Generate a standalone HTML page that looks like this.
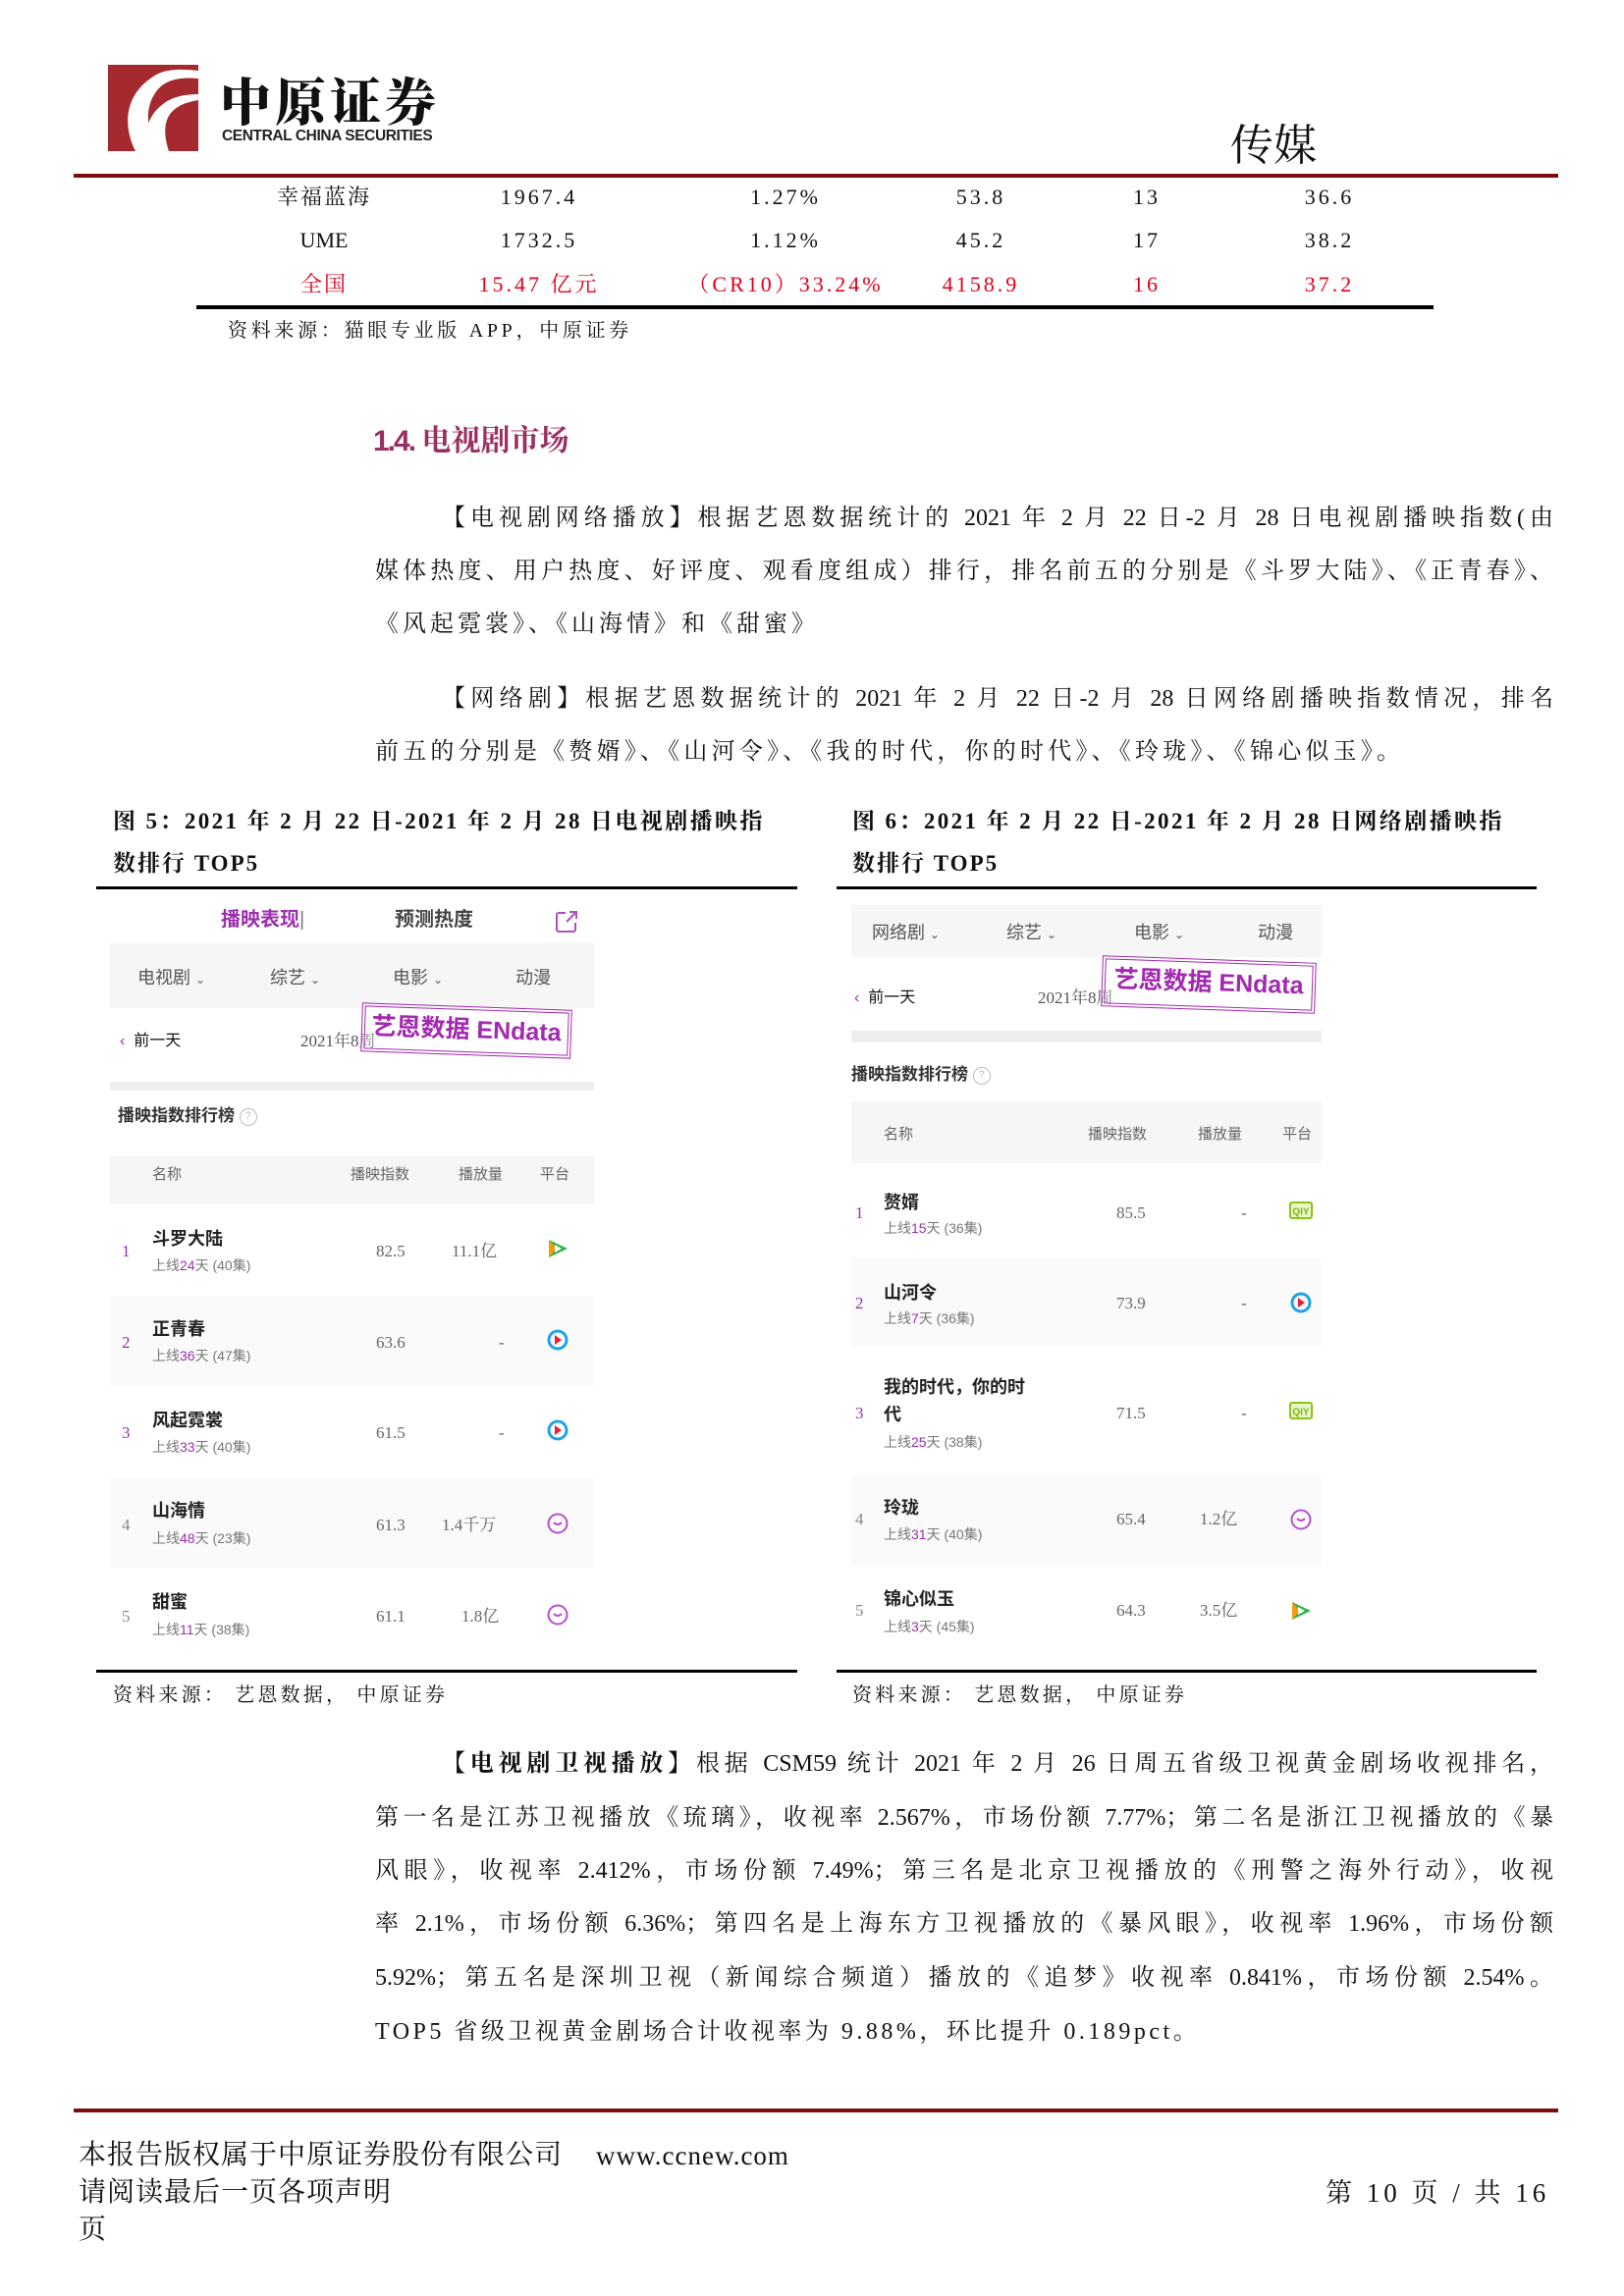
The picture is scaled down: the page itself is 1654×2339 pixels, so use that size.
<!DOCTYPE html>
<html><head><meta charset="utf-8">
<style>
*{margin:0;padding:0;box-sizing:border-box}
body{width:1654px;height:2339px;background:#fff;position:relative;overflow:hidden;font-family:"Liberation Serif","Noto Serif CJK SC",serif;color:#111}
.a{position:absolute;white-space:nowrap}
.c{position:absolute;white-space:nowrap;line-height:30px;height:30px}
.cc{transform:translateX(-50%)}
.p{position:absolute;font-size:24px;line-height:30px;white-space:nowrap}
.j{text-align:justify;text-align-last:justify;white-space:normal;overflow:hidden;height:30px}
.ss{font-family:"Liberation Sans","Noto Sans CJK SC",sans-serif}
.g{color:#555}
.pu{color:#9b2fae}
.b{font-weight:bold}
.band{position:absolute;background:#f6f6f6}
.rk{font-size:17px;color:#9b2fae}
.nm{font-size:18px;font-family:"Liberation Sans","Noto Sans CJK SC",sans-serif;font-weight:bold;color:#222}
.sb{font-size:14px;color:#777;font-family:"Liberation Sans","Noto Sans CJK SC",sans-serif}
.sb i{font-style:normal;color:#9b2fae}
.v{font-size:17px;color:#666}
.hd{font-size:15px;color:#666;font-family:"Liberation Sans","Noto Sans CJK SC",sans-serif}
.tb{font-size:18px;font-family:"Liberation Sans","Noto Sans CJK SC",sans-serif;color:#555}
.stamp{position:absolute;border:4px double #a22ab0;color:#a22ab0;font-family:"Liberation Sans","Noto Sans CJK SC",sans-serif;font-weight:bold;font-size:25px;line-height:40px;text-align:center;transform:rotate(2deg);background:rgba(255,255,255,0.3)}
.tn{letter-spacing:3px}
</style></head><body>

<svg class="a" style="left:110px;top:66px" width="92" height="88" viewBox="0 0 92 88">
<rect x="0" y="0" width="92" height="88" fill="#a52a2f"/>
<path d="M28 88 C14 60 18 30 46 12 C58 4 72 4 92 6 L92 14 C72 12 58 16 50 26 C36 44 40 66 50 88 Z" fill="#fff"/>
<path d="M40 88 C36 70 40 52 56 40 C66 32 80 30 92 30 L92 36 C80 38 68 42 62 52 C56 62 58 76 62 88Z" fill="#fff"/>
</svg>
<div class="a b" style="left:224px;top:74px;font-size:52px;line-height:54px;letter-spacing:4px;font-family:'Noto Serif CJK SC',serif;font-weight:900;color:#111">中原证券</div>
<div class="a b ss" style="left:226px;top:130px;font-size:15.5px;line-height:18px;letter-spacing:-0.4px;color:#222">CENTRAL CHINA SECURITIES</div>
<div class="a" style="left:1253px;top:112px;font-size:44px;font-family:'Noto Serif CJK SC',serif;color:#111">传媒</div>
<div class="a" style="left:75px;top:177px;width:1512px;height:4px;background:#7f0c0c"></div>

<div style="font-size:22px">
<div class="c cc" style="left:330px;top:186px;letter-spacing:2px">幸福蓝海</div>
<div class="c cc tn" style="left:549px;top:186px">1967.4</div>
<div class="c cc tn" style="left:800px;top:186px">1.27%</div>
<div class="c cc tn" style="left:999px;top:186px">53.8</div>
<div class="c cc tn" style="left:1168px;top:186px">13</div>
<div class="c cc tn" style="left:1354px;top:186px">36.6</div>
<div class="c cc" style="left:330px;top:230px">UME</div>
<div class="c cc tn" style="left:549px;top:230px">1732.5</div>
<div class="c cc tn" style="left:800px;top:230px">1.12%</div>
<div class="c cc tn" style="left:999px;top:230px">45.2</div>
<div class="c cc tn" style="left:1168px;top:230px">17</div>
<div class="c cc tn" style="left:1354px;top:230px">38.2</div>
<div style="color:#e3001b">
<div class="c cc" style="left:330px;top:275px;letter-spacing:2px">全国</div>
<div class="c cc tn" style="left:549px;top:275px">15.47 亿元</div>
<div class="c cc tn" style="left:800px;top:275px">（CR10）33.24%</div>
<div class="c cc tn" style="left:999px;top:275px">4158.9</div>
<div class="c cc tn" style="left:1168px;top:275px">16</div>
<div class="c cc tn" style="left:1354px;top:275px">37.2</div>
</div>
</div>
<div class="a" style="left:200px;top:311px;width:1260px;height:4px;background:#000"></div>
<div class="c" style="left:232px;top:322px;font-size:20px;letter-spacing:3.7px">资料来源：猫眼专业版 APP，中原证券</div>

<div class="a b" style="left:380px;top:430px;font-size:30px;color:#9a2f62;line-height:40px"><span class="ss" style="letter-spacing:-2px">1.4.</span> 电视剧市场</div>

<div class="p j" style="left:450px;top:513px;width:1132px">【电视剧网络播放】根据艺恩数据统计的 2021 年 2 月 22 日-2 月 28 日电视剧播映指数(由</div>
<div class="p j" style="left:382px;top:567px;width:1200px">媒体热度、用户热度、好评度、观看度组成）排行，排名前五的分别是《斗罗大陆》、《正青春》、</div>
<div class="p" style="left:382px;top:621px;letter-spacing:4px">《风起霓裳》、《山海情》和《甜蜜》</div>
<div class="p j" style="left:450px;top:697px;width:1132px">【网络剧】根据艺恩数据统计的 2021 年 2 月 22 日-2 月 28 日网络剧播映指数情况，排名</div>
<div class="p" style="left:382px;top:751px;letter-spacing:4.2px">前五的分别是《赘婿》、《山河令》、《我的时代，你的时代》、《玲珑》、《锦心似玉》。</div>

<div class="p b" style="left:115px;top:822px;font-size:23px;letter-spacing:2.4px">图 5：2021 年 2 月 22 日-2021 年 2 月 28 日电视剧播映指</div>
<div class="p b" style="left:115px;top:865px;font-size:23px;letter-spacing:2px">数排行 TOP5</div>
<div class="p b" style="left:868px;top:822px;font-size:23px;letter-spacing:2.4px">图 6：2021 年 2 月 22 日-2021 年 2 月 28 日网络剧播映指</div>
<div class="p b" style="left:868px;top:865px;font-size:23px;letter-spacing:2px">数排行 TOP5</div>
<div class="a" style="left:98px;top:903px;width:714px;height:3px;background:#000"></div>
<div class="a" style="left:852px;top:903px;width:713px;height:3px;background:#000"></div>

<div class="c b ss pu" style="left:225px;top:922px;font-size:20px">播映表现<span style="font-weight:normal;color:#777">|</span></div>
<div class="c b ss" style="left:402px;top:922px;font-size:20px;color:#444">预测热度</div>
<svg class="a" style="left:564px;top:926px" width="26" height="26" viewBox="0 0 26 26"><path d="M12 4H5a2 2 0 0 0-2 2v15a2 2 0 0 0 2 2h15a2 2 0 0 0 2-2v-7M13 13L23 3M16 3h7v7" fill="none" stroke="#b04dc0" stroke-width="2"/></svg>
<div class="band" style="left:112px;top:960px;width:493px;height:67px"></div>
<div class="c tb pu" style="left:140px;top:981px">电视剧 <span style="font-size:12px">⌄</span></div>
<div class="c tb" style="left:275px;top:981px">综艺 <span style="font-size:12px">⌄</span></div>
<div class="c tb" style="left:400px;top:981px">电影 <span style="font-size:12px">⌄</span></div>
<div class="c tb" style="left:525px;top:981px">动漫</div>
<div class="c ss" style="left:122px;top:1046px;font-size:16px"><span class="pu">‹</span>&nbsp; 前一天</div>
<div class="c" style="left:306px;top:1046px;font-size:17px;color:#555">2021年8周</div>
<div class="stamp" style="left:368px;top:1025px;width:214px;height:50px">艺恩数据 ENdata</div>
<div class="band" style="left:112px;top:1102px;width:493px;height:9px;background:#eee"></div>
<div class="c b ss" style="left:120px;top:1122px;font-size:17px;color:#333">播映指数排行榜 <span style="display:inline-block;width:18px;height:18px;border:1.5px solid #bbb;border-radius:50%;font-size:11px;line-height:15px;text-align:center;color:#bbb;font-weight:normal;vertical-align:middle">?</span></div>
<div class="band" style="left:112px;top:1178px;width:493px;height:49px"></div>
<div class="c hd" style="left:155px;top:1182px">名称</div>
<div class="c hd" style="left:357px;top:1182px">播映指数</div>
<div class="c hd" style="left:467px;top:1182px">播放量</div>
<div class="c hd" style="left:550px;top:1182px">平台</div>
<div class="band" style="left:112px;top:1320px;width:493px;height:92px;background:#fafafa"></div>
<div class="band" style="left:112px;top:1505px;width:493px;height:92px;background:#fafafa"></div>

<div class="c rk" style="left:124px;top:1260px">1</div><div class="c nm" style="left:155px;top:1247px">斗罗大陆</div><div class="c sb" style="left:155px;top:1274px">上线<i>24</i>天 (40集)</div><div class="c v" style="left:383px;top:1260px">82.5</div><div class="c v" style="left:460px;top:1260px">11.1亿</div>
<div class="c rk" style="left:124px;top:1353px">2</div><div class="c nm" style="left:155px;top:1339px">正青春</div><div class="c sb" style="left:155px;top:1366px">上线<i>36</i>天 (47集)</div><div class="c v" style="left:383px;top:1353px">63.6</div><div class="c v" style="left:508px;top:1353px">-</div>
<div class="c rk" style="left:124px;top:1445px">3</div><div class="c nm" style="left:155px;top:1432px">风起霓裳</div><div class="c sb" style="left:155px;top:1459px">上线<i>33</i>天 (40集)</div><div class="c v" style="left:383px;top:1445px">61.5</div><div class="c v" style="left:508px;top:1445px">-</div>
<div class="c rk" style="left:124px;top:1539px;color:#888">4</div><div class="c nm" style="left:155px;top:1524px">山海情</div><div class="c sb" style="left:155px;top:1552px">上线<i>48</i>天 (23集)</div><div class="c v" style="left:383px;top:1539px">61.3</div><div class="c v" style="left:450px;top:1539px">1.4千万</div>
<div class="c rk" style="left:124px;top:1632px;color:#888">5</div><div class="c nm" style="left:155px;top:1617px">甜蜜</div><div class="c sb" style="left:155px;top:1645px">上线<i>11</i>天 (38集)</div><div class="c v" style="left:383px;top:1632px">61.1</div><div class="c v" style="left:470px;top:1632px">1.8亿</div>

<svg class="a" style="left:557px;top:1262px" width="22" height="20" viewBox="0 0 22 20"><path d="M2 1L21 10L2 19Z" fill="#2fb24a"/><path d="M2 1L10 10L2 19Z" fill="#f39c12"/><path d="M8 6L15 10L8 14Z" fill="#fff"/></svg>
<svg class="a" style="left:557px;top:1354px" width="22" height="22" viewBox="0 0 22 22"><circle cx="11" cy="11" r="9" fill="none" stroke="#1fa3e8" stroke-width="3"/><path d="M8 6l7 5-7 5z" fill="#e8203a"/></svg>
<svg class="a" style="left:557px;top:1446px" width="22" height="22" viewBox="0 0 22 22"><circle cx="11" cy="11" r="9" fill="none" stroke="#1fa3e8" stroke-width="3"/><path d="M8 6l7 5-7 5z" fill="#e8203a"/></svg>
<svg class="a" style="left:556px;top:1540px" width="24" height="24" viewBox="0 0 24 24"><circle cx="12" cy="12" r="9.5" fill="none" stroke="#b74fcf" stroke-width="2"/><path d="M8 11q4 4 8 0" fill="none" stroke="#b74fcf" stroke-width="2"/></svg>
<svg class="a" style="left:556px;top:1633px" width="24" height="24" viewBox="0 0 24 24"><circle cx="12" cy="12" r="9.5" fill="none" stroke="#b74fcf" stroke-width="2"/><path d="M8 11q4 4 8 0" fill="none" stroke="#b74fcf" stroke-width="2"/></svg>

<div class="band" style="left:867px;top:922px;width:479px;height:53px"></div>
<div class="c tb pu" style="left:888px;top:935px">网络剧 <span style="font-size:12px">⌄</span></div>
<div class="c tb" style="left:1025px;top:935px">综艺 <span style="font-size:12px">⌄</span></div>
<div class="c tb" style="left:1155px;top:935px">电影 <span style="font-size:12px">⌄</span></div>
<div class="c tb" style="left:1281px;top:935px">动漫</div>
<div class="c ss" style="left:870px;top:1002px;font-size:16px"><span class="pu">‹</span>&nbsp; 前一天</div>
<div class="c" style="left:1057px;top:1002px;font-size:17px;color:#555">2021年8周</div>
<div class="stamp" style="left:1122px;top:977px;width:218px;height:52px">艺恩数据 ENdata</div>
<div class="band" style="left:867px;top:1050px;width:479px;height:12px;background:#eee"></div>
<div class="c b ss" style="left:867px;top:1080px;font-size:17px;color:#333">播映指数排行榜 <span style="display:inline-block;width:18px;height:18px;border:1.5px solid #bbb;border-radius:50%;font-size:11px;line-height:15px;text-align:center;color:#bbb;font-weight:normal;vertical-align:middle">?</span></div>
<div class="band" style="left:867px;top:1122px;width:479px;height:63px"></div>
<div class="c hd" style="left:900px;top:1141px">名称</div>
<div class="c hd" style="left:1108px;top:1141px">播映指数</div>
<div class="c hd" style="left:1220px;top:1141px">播放量</div>
<div class="c hd" style="left:1306px;top:1141px">平台</div>
<div class="band" style="left:867px;top:1282px;width:479px;height:90px;background:#fafafa"></div>
<div class="band" style="left:867px;top:1504px;width:479px;height:90px;background:#fafafa"></div>

<div class="c rk" style="left:871px;top:1221px">1</div><div class="c nm" style="left:900px;top:1210px">赘婿</div><div class="c sb" style="left:900px;top:1236px">上线<i>15</i>天 (36集)</div><div class="c v" style="left:1137px;top:1221px">85.5</div><div class="c v" style="left:1264px;top:1221px">-</div>
<div class="c rk" style="left:871px;top:1313px">2</div><div class="c nm" style="left:900px;top:1302px">山河令</div><div class="c sb" style="left:900px;top:1328px">上线<i>7</i>天 (36集)</div><div class="c v" style="left:1137px;top:1313px">73.9</div><div class="c v" style="left:1264px;top:1313px">-</div>
<div class="c rk" style="left:871px;top:1425px">3</div><div class="c nm" style="left:900px;top:1398px">我的时代，你的时</div><div class="c nm" style="left:900px;top:1426px">代</div><div class="c sb" style="left:900px;top:1454px">上线<i>25</i>天 (38集)</div><div class="c v" style="left:1137px;top:1425px">71.5</div><div class="c v" style="left:1264px;top:1425px">-</div>
<div class="c rk" style="left:871px;top:1533px;color:#888">4</div><div class="c nm" style="left:900px;top:1521px">玲珑</div><div class="c sb" style="left:900px;top:1548px">上线<i>31</i>天 (40集)</div><div class="c v" style="left:1137px;top:1533px">65.4</div><div class="c v" style="left:1222px;top:1533px">1.2亿</div>
<div class="c rk" style="left:871px;top:1626px;color:#888">5</div><div class="c nm" style="left:900px;top:1614px">锦心似玉</div><div class="c sb" style="left:900px;top:1642px">上线<i>3</i>天 (45集)</div><div class="c v" style="left:1137px;top:1626px">64.3</div><div class="c v" style="left:1222px;top:1626px">3.5亿</div>

<svg class="a" style="left:1313px;top:1224px" width="24" height="18" viewBox="0 0 24 18"><rect x="1" y="1" width="22" height="16" rx="2" fill="#e9f7c8" stroke="#8cc21c" stroke-width="2"/><text x="12" y="13.5" font-size="10" font-weight="bold" fill="#7ab317" text-anchor="middle" font-family="Liberation Sans">QIY</text></svg>
<svg class="a" style="left:1314px;top:1316px" width="22" height="22" viewBox="0 0 22 22"><circle cx="11" cy="11" r="9" fill="none" stroke="#1fa3e8" stroke-width="3"/><path d="M8 6l7 5-7 5z" fill="#e8203a"/></svg>
<svg class="a" style="left:1313px;top:1428px" width="24" height="18" viewBox="0 0 24 18"><rect x="1" y="1" width="22" height="16" rx="2" fill="#e9f7c8" stroke="#8cc21c" stroke-width="2"/><text x="12" y="13.5" font-size="10" font-weight="bold" fill="#7ab317" text-anchor="middle" font-family="Liberation Sans">QIY</text></svg>
<svg class="a" style="left:1313px;top:1536px" width="24" height="24" viewBox="0 0 24 24"><circle cx="12" cy="12" r="9.5" fill="none" stroke="#b74fcf" stroke-width="2"/><path d="M8 11q4 4 8 0" fill="none" stroke="#b74fcf" stroke-width="2"/></svg>
<svg class="a" style="left:1314px;top:1631px" width="22" height="20" viewBox="0 0 22 20"><path d="M2 1L21 10L2 19Z" fill="#2fb24a"/><path d="M2 1L10 10L2 19Z" fill="#f39c12"/><path d="M8 6L15 10L8 14Z" fill="#fff"/></svg>

<div class="a" style="left:98px;top:1701px;width:714px;height:3px;background:#000"></div>
<div class="a" style="left:852px;top:1701px;width:713px;height:3px;background:#000"></div>
<div class="c" style="left:115px;top:1712px;font-size:20px;letter-spacing:3.2px">资料来源： 艺恩数据， 中原证券</div>
<div class="c" style="left:868px;top:1712px;font-size:20px;letter-spacing:3.2px">资料来源： 艺恩数据， 中原证券</div>

<div class="p j" style="left:450px;top:1782px;width:1132px"><b>【电视剧卫视播放】</b>根据 CSM59 统计 2021 年 2 月 26 日周五省级卫视黄金剧场收视排名，</div>
<div class="p j" style="left:382px;top:1837px;width:1200px">第一名是江苏卫视播放《琉璃》，收视率 2.567%，市场份额 7.77%；第二名是浙江卫视播放的《暴</div>
<div class="p j" style="left:382px;top:1891px;width:1200px">风眼》，收视率 2.412%，市场份额 7.49%；第三名是北京卫视播放的《刑警之海外行动》，收视</div>
<div class="p j" style="left:382px;top:1945px;width:1200px">率 2.1%，市场份额 6.36%；第四名是上海东方卫视播放的《暴风眼》，收视率 1.96%，市场份额</div>
<div class="p j" style="left:382px;top:2000px;width:1200px">5.92%；第五名是深圳卫视（新闻综合频道）播放的《追梦》收视率 0.841%，市场份额 2.54%。</div>
<div class="p" style="left:382px;top:2055px;letter-spacing:3.5px">TOP5 省级卫视黄金剧场合计收视率为 9.88%，环比提升 0.189pct。</div>

<div class="a" style="left:75px;top:2148px;width:1512px;height:4px;background:#7f0c0c"></div>
<div class="c" style="left:80px;top:2181px;font-size:28px;letter-spacing:1px">本报告版权属于中原证券股份有限公司</div>
<div class="c" style="left:607px;top:2181px;font-size:27px;letter-spacing:1px">www.ccnew.com</div>
<div class="c" style="left:80px;top:2219px;font-size:28px;letter-spacing:1px">请阅读最后一页各项声明</div>
<div class="c" style="left:1350px;top:2219px;font-size:27px;letter-spacing:4px">第 10 页 / 共 16</div>
<div class="c" style="left:80px;top:2257px;font-size:28px">页</div>
</body></html>
